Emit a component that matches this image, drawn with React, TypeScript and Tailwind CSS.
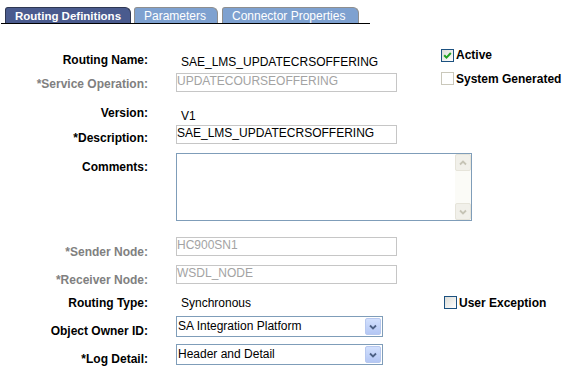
import React from "react";

const lbl = "w-[148px] shrink-0 text-right font-bold leading-[14px]";
const lblGrey = lbl + " text-[#808080]";

function TextBox({ text, disabled, mt }: { text: string; disabled?: boolean; mt: string }) {
  return (
    <div
      className={`${mt} w-[221px] h-[19px] border border-[#c6c6c6] pt-[1px] leading-[13px] whitespace-nowrap overflow-hidden ${
        disabled ? "text-[#a3a3a3]" : "text-black"
      }`}
    >
      {text}
    </div>
  );
}

function Select({ text }: { text: string }) {
  return (
    <div className="mt-[2px] w-[207px] h-[21px] border border-[#7f9db9] flex p-[1px]">
      <div className="flex-1 pl-[0px] pt-[1px] leading-[14px] whitespace-nowrap overflow-hidden">{text}</div>
      <div className="w-[16px] h-full rounded-[2px] border border-[#b7c8ef] bg-linear-to-b from-[#d2e0fd] to-[#b4c7f4] flex items-center justify-center">
        <svg width="8" height="6" viewBox="0 0 8 6">
          <path d="M1 1.5 L4 4.5 L7 1.5" stroke="#4d6185" strokeWidth="1.8" fill="none" />
        </svg>
      </div>
    </div>
  );
}

function Check({ checked, disabled, mt }: { checked?: boolean; disabled?: boolean; mt: string }) {
  return (
    <div
      className={`${mt} w-[13px] h-[13px] shrink-0 border flex items-center justify-center ${
        disabled
          ? "border-[#cac8bb] bg-white"
          : "border-[#1c5180] bg-linear-to-br from-[#dcdcd7] to-white"
      }`}
    >
      {checked && (
        <svg width="9" height="9" viewBox="0 0 9 9">
          <path d="M1.2 4.2 L3.5 6.6 L7.8 2" stroke="#21a121" strokeWidth="2" fill="none" />
        </svg>
      )}
    </div>
  );
}

function ScrollBtn({ up }: { up?: boolean }) {
  return (
    <div className="h-[17px] rounded-[2px] border border-[#e6e4da] bg-[#f1f0ea] flex items-center justify-center">
      <svg width="8" height="6" viewBox="0 0 8 6">
        <path
          d={up ? "M1 4.5 L4 1.5 L7 4.5" : "M1 1.5 L4 4.5 L7 1.5"}
          stroke="#c6c4b6"
          strokeWidth="1.8"
          fill="none"
        />
      </svg>
    </div>
  );
}

export default function App() {
  return (
    <div className="w-[577px] h-[368px] bg-white text-[12px] text-black overflow-hidden font-['Liberation_Sans',Arial,sans-serif]">
      {/* Tabs */}
      <div className="ml-[1px] w-[369px] h-[24px] border-b border-black flex items-end pl-[4px]">
        <div className="w-[126px] h-[16px] bg-[#4a5b8e] border border-b-0 border-[#2f3752] rounded-tl-[3px] rounded-tr-[6px] text-white font-bold text-[11.5px] leading-[14px] pl-[9px] pt-[1px] whitespace-nowrap">
          Routing Definitions
        </div>
        <div className="ml-[3px] w-[84px] h-[16px] bg-[#7ea1d0] border border-b-0 border-[#8e8e8e] rounded-tl-[3px] rounded-tr-[6px] text-white leading-[14px] pl-[9px] pt-[1px] whitespace-nowrap">
          Parameters
        </div>
        <div className="ml-[4px] w-[137px] h-[16px] bg-[#7ea1d0] border border-b-0 border-[#8e8e8e] rounded-tl-[3px] rounded-tr-[6px] text-white leading-[14px] pl-[9px] pt-[1px] whitespace-nowrap">
          Connector Properties
        </div>
      </div>

      {/* Form */}
      <div className="pt-[23px] flex flex-col">
        {/* Routing Name */}
        <div className="flex h-[25px]">
          <div className={lbl + " mt-[6px]"}>Routing Name:</div>
          <div className="ml-[28px] w-[265px] shrink-0 pl-[5px] mt-[8px] leading-[14px]">SAE_LMS_UPDATECRSOFFERING</div>
          <div className="flex">
            <Check checked mt="mt-[2px]" />
            <div className="ml-[2px] mt-[1px] font-bold leading-[14px]">Active</div>
          </div>
        </div>

        {/* Service Operation */}
        <div className="flex h-[28px]">
          <div className={lblGrey + " mt-[5px]"}>*Service Operation:</div>
          <div className="ml-[28px] w-[265px] shrink-0">
            <TextBox text="UPDATECOURSEOFFERING" disabled mt="mt-[1px]" />
          </div>
          <div className="flex">
            <Check disabled mt="mt-[0px]" />
            <div className="ml-[2px] mt-[0px] font-bold leading-[14px] whitespace-nowrap">System Generated</div>
          </div>
        </div>

        {/* Version */}
        <div className="flex h-[23px]">
          <div className={lbl + " mt-[6px]"}>Version:</div>
          <div className="ml-[28px] pl-[5px] mt-[9px] leading-[14px]">V1</div>
        </div>

        {/* Description */}
        <div className="flex h-[27px]">
          <div className={lbl + " mt-[8px]"}>*Description:</div>
          <div className="ml-[28px]">
            <TextBox text="SAE_LMS_UPDATECRSOFFERING" mt="mt-[2px]" />
          </div>
        </div>

        {/* Comments */}
        <div className="flex h-[85px]">
          <div className={lbl + " mt-[10px]"}>Comments:</div>
          <div className="ml-[28px] mt-[3px] w-[296px] h-[68px] border border-[#7f9db9] flex">
            <div className="flex-1" />
            <div className="w-[16px] h-full bg-[#fbfbf7] flex flex-col justify-between">
              <ScrollBtn up />
              <ScrollBtn />
            </div>
          </div>
        </div>

        {/* Sender Node */}
        <div className="flex h-[28px]">
          <div className={lblGrey + " mt-[10px]"}>*Sender Node:</div>
          <div className="ml-[28px]">
            <TextBox text="HC900SN1" disabled mt="mt-[2px]" />
          </div>
        </div>

        {/* Receiver Node */}
        <div className="flex h-[29px]">
          <div className={lblGrey + " mt-[10px]"}>*Receiver Node:</div>
          <div className="ml-[28px]">
            <TextBox text="WSDL_NODE" disabled mt="mt-[2px]" />
          </div>
        </div>

        {/* Routing Type */}
        <div className="flex h-[22px]">
          <div className={lbl + " mt-[4px]"}>Routing Type:</div>
          <div className="ml-[28px] w-[268px] shrink-0 pl-[5px] mt-[4px] leading-[14px]">Synchronous</div>
          <div className="flex">
            <Check mt="mt-[4px]" />
            <div className="ml-[2px] mt-[4px] font-bold leading-[14px] whitespace-nowrap">User Exception</div>
          </div>
        </div>

        {/* Object Owner ID */}
        <div className="flex h-[28px]">
          <div className={lbl + " mt-[10px]"}>Object Owner ID:</div>
          <div className="ml-[28px]">
            <Select text="SA Integration Platform" />
          </div>
        </div>

        {/* Log Detail */}
        <div className="flex h-[26px]">
          <div className={lbl + " mt-[10px]"}>*Log Detail:</div>
          <div className="ml-[28px]">
            <Select text="Header and Detail" />
          </div>
        </div>
      </div>
    </div>
  );
}
